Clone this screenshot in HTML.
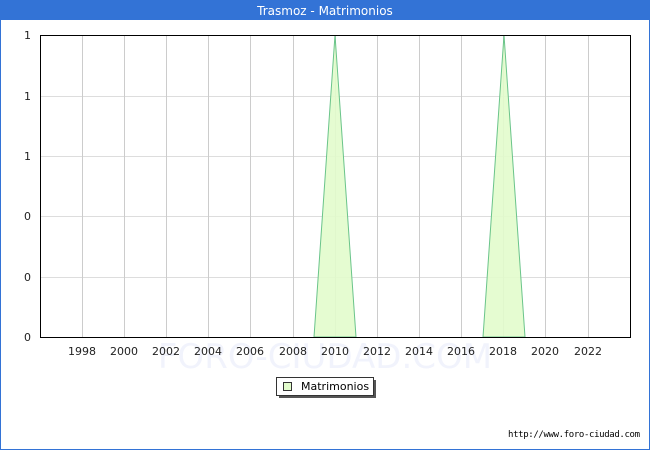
<!DOCTYPE html>
<html><head><style>
body{margin:0;width:650px;height:450px;overflow:hidden;background:#fff;font-family:"DejaVu Sans",sans-serif;}
</style></head><body>
<svg width="650" height="450" xmlns="http://www.w3.org/2000/svg" font-family="DejaVu Sans, sans-serif">
<rect x="0.5" y="0.5" width="649" height="449" fill="#fff" stroke="#3373d6" stroke-width="1"/>
<rect x="0" y="0" width="650" height="20" fill="#3373d6"/>
<text x="325" y="15" text-anchor="middle" fill="#fff" font-size="12">Trasmoz - Matrimonios</text>
<text x="325" y="368" text-anchor="middle" fill="#f1f3fc" font-size="34">FORO-CIUDAD.COM</text>
<g stroke="#ddd" stroke-width="1">
<line x1="40" y1="96.5" x2="630" y2="96.5"/><line x1="40" y1="156.5" x2="630" y2="156.5"/>
<line x1="40" y1="216.5" x2="630" y2="216.5"/><line x1="40" y1="277.5" x2="630" y2="277.5"/>
</g>
<g stroke="#ccc" stroke-width="1">
<line x1="82.5" y1="35" x2="82.5" y2="337"/><line x1="124.5" y1="35" x2="124.5" y2="337"/>
<line x1="166.5" y1="35" x2="166.5" y2="337"/><line x1="208.5" y1="35" x2="208.5" y2="337"/>
<line x1="250.5" y1="35" x2="250.5" y2="337"/><line x1="293.5" y1="35" x2="293.5" y2="337"/>
<line x1="335.5" y1="35" x2="335.5" y2="337"/><line x1="377.5" y1="35" x2="377.5" y2="337"/>
<line x1="419.5" y1="35" x2="419.5" y2="337"/><line x1="461.5" y1="35" x2="461.5" y2="337"/>
<line x1="503.5" y1="35" x2="503.5" y2="337"/><line x1="545.5" y1="35" x2="545.5" y2="337"/>
<line x1="588.5" y1="35" x2="588.5" y2="337"/>
</g>
<polygon points="314,337 335,35 356,337" fill="#e2fccc" fill-opacity="0.9" stroke="#6ac48a" stroke-width="1"/>
<polygon points="483,337 504,35 525,337" fill="#e2fccc" fill-opacity="0.9" stroke="#6ac48a" stroke-width="1"/>
<rect x="40.5" y="35.5" width="590" height="302" fill="none" stroke="#000" stroke-width="1"/>
<g font-size="11" fill="#222" text-anchor="end">
<text x="31" y="39">1</text><text x="31" y="100">1</text><text x="31" y="160">1</text>
<text x="31" y="220">0</text><text x="31" y="281">0</text><text x="31" y="341">0</text>
</g>
<g font-size="11" fill="#222" text-anchor="middle">
<text x="82" y="355">1998</text><text x="124" y="355">2000</text><text x="166" y="355">2002</text>
<text x="208" y="355">2004</text><text x="250" y="355">2006</text><text x="293" y="355">2008</text>
<text x="335" y="355">2010</text><text x="377" y="355">2012</text><text x="419" y="355">2014</text>
<text x="461" y="355">2016</text><text x="503" y="355">2018</text><text x="545" y="355">2020</text>
<text x="588" y="355">2022</text>
</g>
<rect x="279" y="380" width="97" height="18" fill="#555"/>
<rect x="276.5" y="377.5" width="97" height="18" fill="#fff" stroke="#333"/>
<rect x="283.5" y="382.5" width="8" height="8" fill="#e2fccc" stroke="#333"/>
<text x="301" y="390" font-size="11" fill="#000">Matrimonios</text>
<text x="640" y="437" font-size="9" fill="#000" text-anchor="end" font-family="DejaVu Sans Mono, monospace" textLength="132">http://www.foro-ciudad.com</text>
</svg>
</body></html>
